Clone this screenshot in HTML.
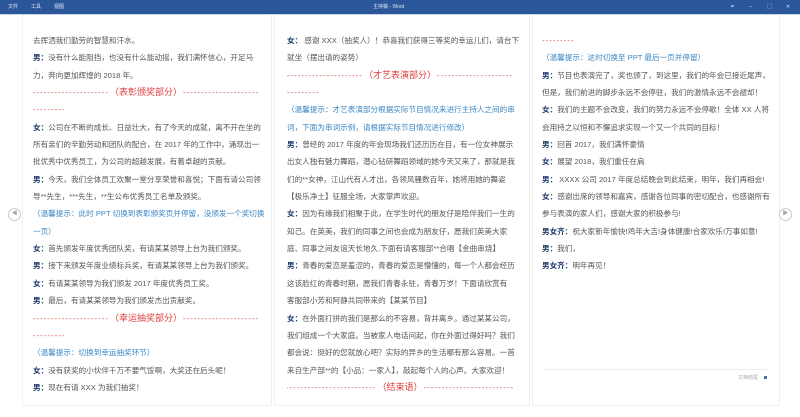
<!DOCTYPE html>
<html><head><meta charset="utf-8"><style>
*{margin:0;padding:0;box-sizing:border-box}
body{width:800px;height:417px;overflow:hidden;background:#fff;font-family:"Liberation Sans","Noto Sans CJK SC",sans-serif;position:relative}
.bar{position:absolute;left:0;top:0;width:800px;height:14px;background:#2b579a;color:#dfe7f3;font-size:5px;line-height:14px}
.bar2{position:absolute;left:0;top:14px;width:800px;height:1px;background:#c7d6ea}
.page{position:absolute;top:15px;height:391px;border:1px solid #f0f0f0;border-top:none;background:#fff}
.col{position:absolute;top:32px;font-size:7.6px;color:#555;white-space:nowrap}
.col div{height:17.35px;line-height:17.35px}
b{color:#1f3a6e}
.r{color:#e03c3c;letter-spacing:1.1px}
.t{color:#3a86c4}
.sec{display:flex;width:226px;color:#e03c3c;align-items:center}
.sec i{flex:1;overflow:hidden;font-style:normal;letter-spacing:1.1px}
.sec span{font-size:9px;padding:0 1px}
.arrow{position:absolute;width:13px;height:13px;border:1px solid #ccc;border-radius:50%;top:208px;font-size:6px;color:#aaa;text-align:center;line-height:11px}
</style></head><body>
<div class="bar"><span style="position:absolute;left:8px">文件</span><span style="position:absolute;left:31px">工具</span><span style="position:absolute;left:54px">视图</span><span style="position:absolute;left:373px">主持稿 - Word</span><span style="position:absolute;left:731px">⌗</span><span style="position:absolute;left:749px">–</span><span style="position:absolute;left:767px">▢</span><span style="position:absolute;left:786px">✕</span></div>
<div class="bar2"></div>
<div class="page" style="left:22px;width:250px"></div>
<div class="page" style="left:274px;width:256px"></div>
<div class="page" style="left:532px;width:248px"></div>
<div class="arrow" style="left:8px">◀</div>
<div class="arrow" style="left:779px">▶</div>

<div class="col" style="left:33px">
<div>去挥洒我们勤劳的智慧和汗水。</div>
<div><b>男：</b>没有什么能阻挡，也没有什么能动摇，我们满怀信心，开足马</div>
<div>力，奔向更加辉煌的 2018 年。</div>
<div class="sec"><i style="text-align:right;direction:rtl">------------------------------------------</i><span>（表彰颁奖部分）</span><i>------------------------------------------</i></div>
<div class="r">---------</div>
<div><b>女：</b>公司在不断的成长、日益壮大，有了今天的成就，离不开在坐的</div>
<div>所有亲们的辛勤劳动和团队的配合，在 2017 年的工作中，涌现出一</div>
<div>批优秀中优秀员工，为公司的超越发展，有着卓越的贡献。</div>
<div><b>男：</b>今天，我们全体员工欢聚一堂分享荣誉和喜悦；下面有请公司领</div>
<div>导**先生，***先生，**生公布优秀员工名单及颁奖。</div>
<div class="t">（温馨提示：此时 PPT 切换到表彰颁奖页并停留，没颁发一个奖切换</div>
<div class="t">一页）</div>
<div><b>女：</b>首先颁发年度优秀团队奖，有请某某领导上台为我们颁奖。</div>
<div><b>男：</b>接下来颁发年度业绩标兵奖，有请某某领导上台为我们颁奖。</div>
<div><b>女：</b>有请某某领导为我们颁发 2017 年度优秀员工奖。</div>
<div><b>男：</b>最后，有请某某领导为我们颁发杰出贡献奖。</div>
<div class="sec"><i style="text-align:right;direction:rtl">------------------------------------------</i><span>（幸运抽奖部分）</span><i>------------------------------------------</i></div>
<div class="r">---------</div>
<div class="t">（温馨提示：切换到幸运抽奖环节）</div>
<div><b>女：</b>没有获奖的小伙伴千万不要气馁啊，大奖还在后头呢！</div>
<div><b>男：</b>现在有请 XXX 为我们抽奖！</div>
</div>

<div class="col" style="left:287px">
<div><b>女：</b> 感谢 XXX（抽奖人）！恭喜我们获得三等奖的幸运儿们，请台下</div>
<div>就坐（摆出请的姿势）</div>
<div class="sec"><i style="text-align:right;direction:rtl">------------------------------------------</i><span>（才艺表演部分）</span><i>------------------------------------------</i></div>
<div class="r">---------</div>
<div class="t">（温馨提示：才艺表演部分根据实际节目情况来进行主持人之间的串</div>
<div class="t">词，下面为串词示例，请根据实际节目情况进行修改）</div>
<div><b>男：</b>曾经的 2017 年度的年会现场我们还历历在目，有一位女神展示</div>
<div>出女人独有魅力舞蹈，潜心钻研舞蹈领域的她今天又来了，那就是我</div>
<div>们的**女神，江山代有人才出，各领风骚数百年，她将用她的舞姿</div>
<div>【极乐净土】征服全场，大家掌声欢迎。</div>
<div><b>女：</b>因为有缘我们相聚于此，在学生时代的朋友仔是陪伴我们一生的</div>
<div>知己。在英美，我们的同事之间也会成为朋友仔，愿我们英美大家</div>
<div>庭、同事之间友谊天长地久.下面有请客服部**合唱【金曲串烧】</div>
<div><b>男：</b>青春的爱恋是羞涩的，青春的爱恋是懵懂的，每一个人都会经历</div>
<div>这该脸红的青春时期，愿我们青春永驻，青春万岁！下面请欣赏有</div>
<div>客服部小芳和阿静共同带来的【某某节目】</div>
<div><b>女：</b>在外面打拼的我们是那么的不容易，背井离乡。通过某某公司，</div>
<div>我们组成一个大家庭。当被家人电话问起，你在外面过得好吗？我们</div>
<div>都会说：挺好的您就放心吧？实际的异乡的生活哪有那么容易。一首</div>
<div>来自生产部**的【小品：一家人】，敲起每个人的心声。大家欢迎！</div>
<div class="sec"><i style="text-align:right;direction:rtl">------------------------------------------</i><span>（结束语）</span><i>------------------------------------------</i></div>
</div>

<div class="col" style="left:542px">
<div class="r">---------</div>
<div class="t">（温馨提示：这时切换至 PPT 最后一页并停留）</div>
<div><b>男：</b>节目也表演完了，奖也颁了，到这里，我们的年会已接近尾声，</div>
<div>但是，我们前进的脚步永远不会停驻，我们的激情永远不会褪却！</div>
<div><b>女：</b>我们的主题不会改变，我们的努力永远不会停歇！全体 XX 人将</div>
<div>会用持之以恒和不懈追求实现一个又一个共同的目标！</div>
<div><b>男：</b>回首 2017，我们满怀豪情</div>
<div><b>女：</b>展望 2018，我们重任在肩</div>
<div><b>男：</b> XXXX 公司 2017 年度总结晚会到此结束，明年，我们再相会!</div>
<div><b>女：</b>感谢出席的领导和嘉宾，感谢各位同事的密切配合，也感谢所有</div>
<div>参与表演的家人们，感谢大家的积极参与!</div>
<div><b>男女齐：</b>祝大家新年愉快!鸡年大吉!身体健康!合家欢乐!万事如意!</div>
<div><b>男：</b>我们，</div>
<div><b>男女齐：</b>明年再见！</div>
</div>
<div style="position:absolute;left:542px;top:369px;width:226px;height:1px;background:#eee"></div>
<div style="position:absolute;left:738px;top:374px;font-size:5px;color:#aaa">文档结尾</div>
<div style="position:absolute;left:764px;top:376px;width:3px;height:3px;background:#4a6fa0"></div>
</body></html>
